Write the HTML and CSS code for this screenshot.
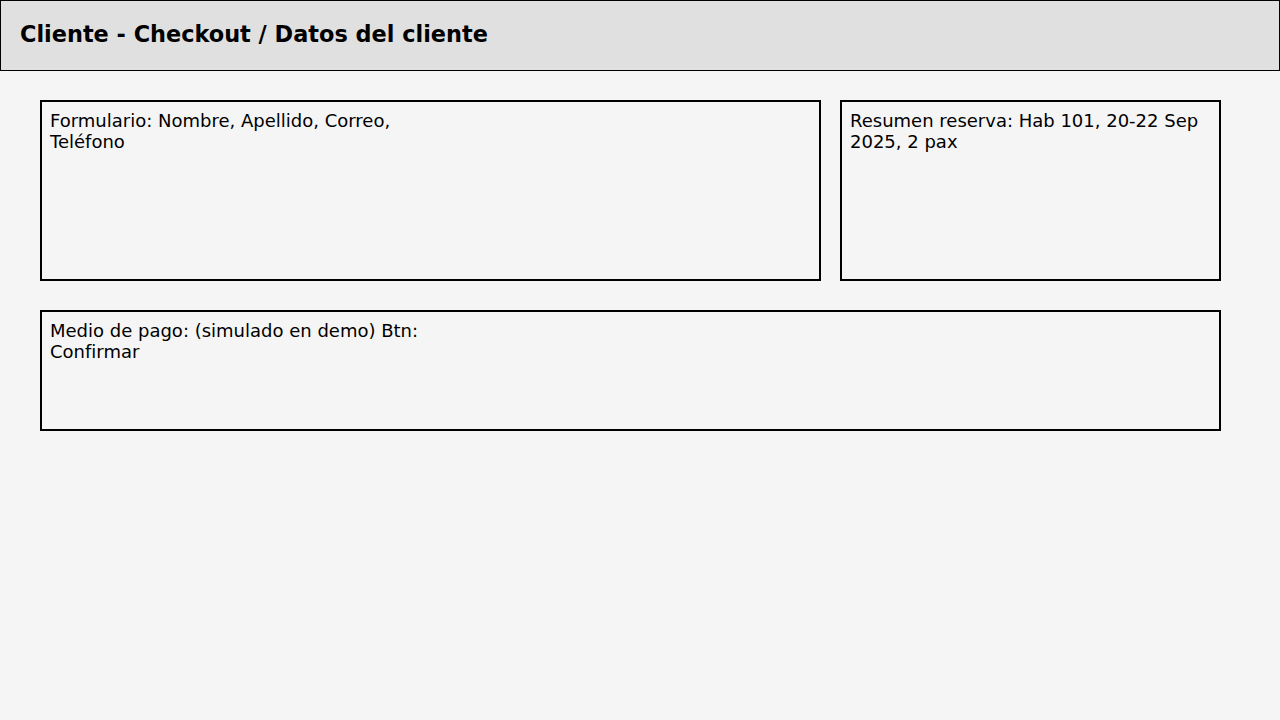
FILE: index.html
```html
<!DOCTYPE html>
<html lang="es">
<head>
<meta charset="utf-8">
<title>Cliente - Checkout / Datos del cliente</title>
<link rel="stylesheet" href="styles.css">
</head>
<body>
<header class="topbar">
  <h1 class="title">Cliente - Checkout / Datos del cliente</h1>
</header>
<main class="layout">
  <section class="panel panel-form">Formulario: Nombre, Apellido, Correo,<br>Teléfono</section>
  <section class="panel panel-summary">Resumen reserva: Hab 101, 20-22 Sep<br>2025, 2 pax</section>
  <section class="panel panel-payment">Medio de pago: (simulado en demo) Btn:<br>Confirmar</section>
</main>
</body>
</html>
```
FILE: styles.css
```css
html, body {
  margin: 0;
  padding: 0;
}
body {
  background: #f5f5f5;
  font-family: "DejaVu Sans", sans-serif;
  color: #000;
  width: 1280px;
  height: 720px;
  overflow: hidden;
}
.topbar {
  box-sizing: border-box;
  height: 71px;
  background: #e0e0e0;
  border: 1px solid #000;
  padding: 0 19px;
  display: flex;
  align-items: flex-start;
}
.title {
  margin: 0;
  padding-top: 20px;
  font-size: 22.4px;
  font-weight: bold;
  line-height: 26px;
}
.layout {
  display: grid;
  grid-template-columns: 781px 381px;
  grid-template-rows: 181px 121px;
  column-gap: 19px;
  row-gap: 29px;
  padding: 29px 40px 0;
}
.panel {
  box-sizing: border-box;
  border: 2px solid #000;
  padding: 8px;
  font-size: 18px;
  line-height: 21px;
}
.panel-payment {
  grid-column: 1 / 3;
}
```
